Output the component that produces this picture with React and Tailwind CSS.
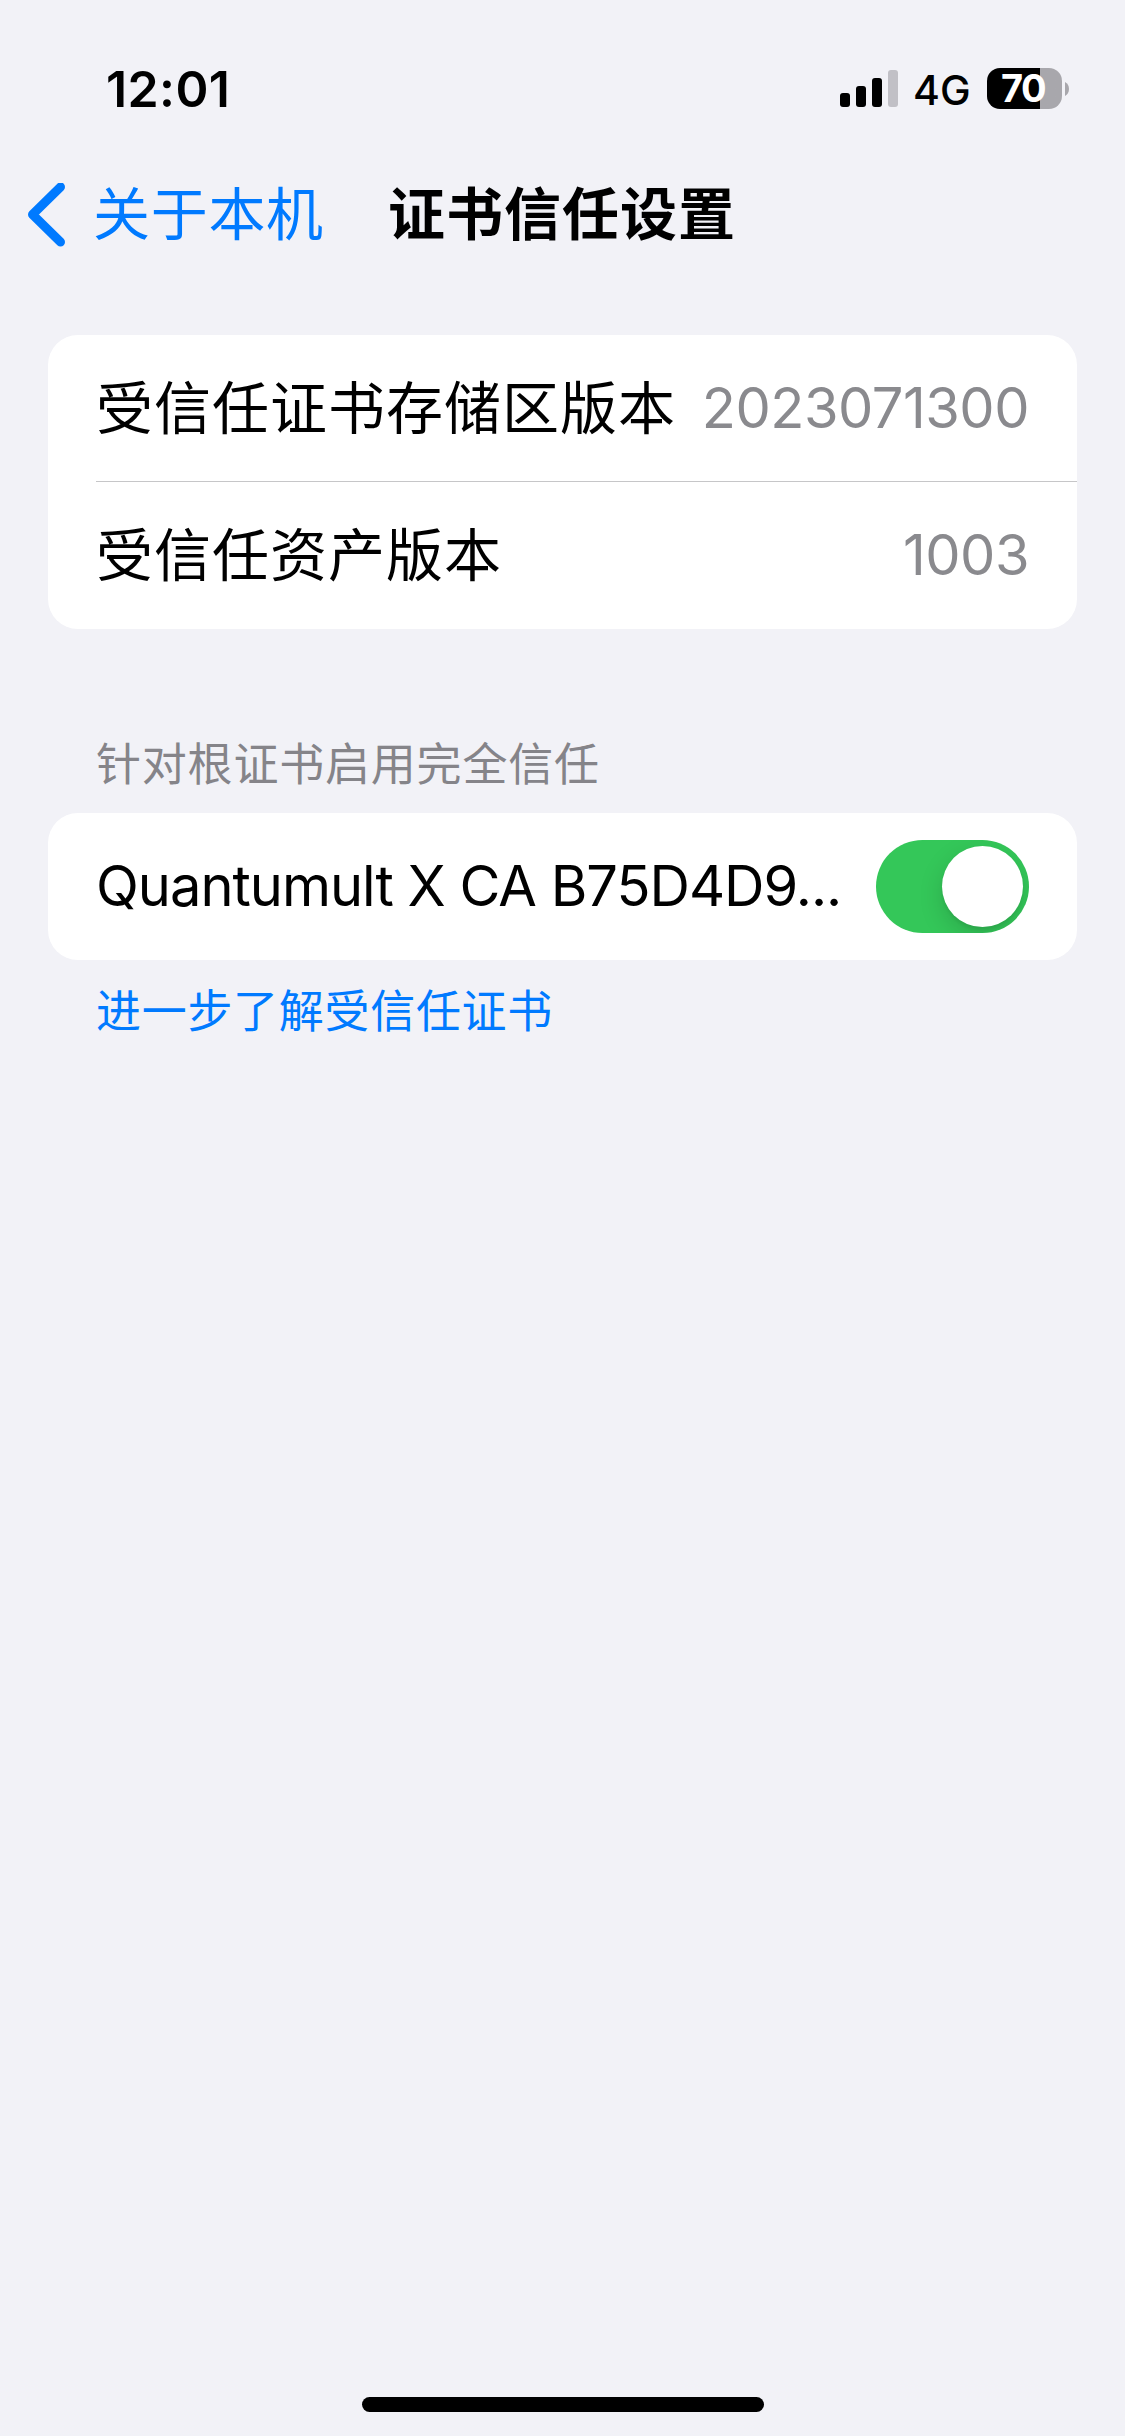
const SIGNAL = [
  { height: 'h-[14px]', color: 'bg-black' },
  { height: 'h-[21px]', color: 'bg-black' },
  { height: 'h-[29px]', color: 'bg-black' },
  { height: 'h-[37px]', color: 'bg-[#c1c0c6]' },
];

function StatusBar() {
  return (
    <header className="flex h-[141px] items-start justify-between pt-[63px] pr-[56px] pl-[106px]">
      <time className="text-[50px] leading-[52px] font-semibold tracking-[0.4px]">12:01</time>
      <div className="flex items-start">
        <div className="mt-[7px] flex h-[37px] items-end gap-[6px]">
          {SIGNAL.map((bar) => (
            <span key={bar.height} className={`w-[10px] rounded-[3px] ${bar.height} ${bar.color}`} />
          ))}
        </div>
        <span className="ml-[15px] w-[60px] text-[41px] leading-[54px] font-medium whitespace-nowrap">4G</span>
        <div className="mt-[5px] ml-[14px] flex items-center">
          <div className="flex h-[41px] w-[75px] items-center justify-center rounded-[13px] bg-linear-to-r from-black from-[53px] to-[#a8a7ac] to-[53px]">
            <span className="pr-[3px] text-[38px] leading-[41px] font-bold tracking-[-1.5px] text-white">70</span>
          </div>
          <svg className="ml-[3px] h-[14px] w-[4px]" viewBox="0 0 4 14" fill="#a8a7ac">
            <path d="M0 0C2.5 1.2 4 3.9 4 7s-1.5 5.800-4 7z" />
          </svg>
        </div>
      </div>
    </header>
  );
}

function NavBar() {
  return (
    <nav className="grid h-[148px] grid-cols-[388px_1fr] items-center">
      <a className="flex items-center pl-[28px] text-[#007aff]">
        <svg className="h-[64px] w-[38px]" viewBox="0 0 38 64" fill="none" stroke="currentColor" strokeWidth="9" strokeLinecap="round" strokeLinejoin="round">
          <path d="M32.500 4L4.500 31.500l28 27.500" />
        </svg>
        <span className="ml-[27px] text-[57px] leading-[72px] tracking-[0.7px] whitespace-nowrap">关于本机</span>
      </a>
      <h1 className="text-[57px] leading-[72px] font-bold tracking-[1px] whitespace-nowrap">证书信任设置</h1>
    </nav>
  );
}

function InfoRow({ label, value, divided }) {
  return (
    <div className="pl-[48px]">
      <div className={`flex h-[147px] items-center justify-between pr-[48px] ${divided ? 'shadow-[inset_0_-1px_0_#c6c6c8]' : ''}`}>
        <span className="text-[57px] leading-[72px] tracking-[1px] whitespace-nowrap">{label}</span>
        <span className="pb-[2px] text-[56px] leading-[72px] tracking-[-0.5px] text-[#8a8a8e]">{value}</span>
      </div>
    </div>
  );
}

function Toggle() {
  return (
    <button role="switch" aria-checked="true" className="flex h-[93px] w-[153px] shrink-0 items-center justify-end overflow-hidden rounded-full bg-[#34c759] pr-[6px]">
      <span className="size-[81px] rounded-full bg-white shadow-[0_9px_24px_rgba(0,0,0,0.15),0_3px_3px_rgba(0,0,0,0.06)]" />
    </button>
  );
}

export default function App() {
  return (
    <div className="flex h-[2436px] w-[1125px] flex-col bg-[#f2f2f7] font-['Inter','Noto_Sans_CJK_SC',sans-serif] text-black">
      <StatusBar />
      <NavBar />
      <main className="flex flex-1 flex-col px-[48px] pt-[46px]">
        <section className="overflow-hidden rounded-[30px] bg-white">
          <InfoRow label="受信任证书存储区版本" value="2023071300" divided />
          <InfoRow label="受信任资产版本" value="1003" />
        </section>
        <h2 className="mt-[106px] pl-[48px] text-[45px] leading-[60px] tracking-[0.8px] text-[#858489]">针对根证书启用完全信任</h2>
        <section className="mt-[18px] flex h-[147px] items-center justify-between rounded-[30px] bg-white px-[48px]">
          <span className="pb-[2px] text-[56px] leading-[72px] tracking-[-1px] whitespace-nowrap">Quantumult X CA B75D4D9...</span>
          <Toggle />
        </section>
        <a className="mt-[22px] pl-[48px] text-[45px] leading-[60px] tracking-[0.7px] text-[#007aff]">进一步了解受信任证书</a>
      </main>
      <footer className="flex justify-center pb-[24px]">
        <div className="h-[15px] w-[402px] rounded-full bg-black" />
      </footer>
    </div>
  );
}
